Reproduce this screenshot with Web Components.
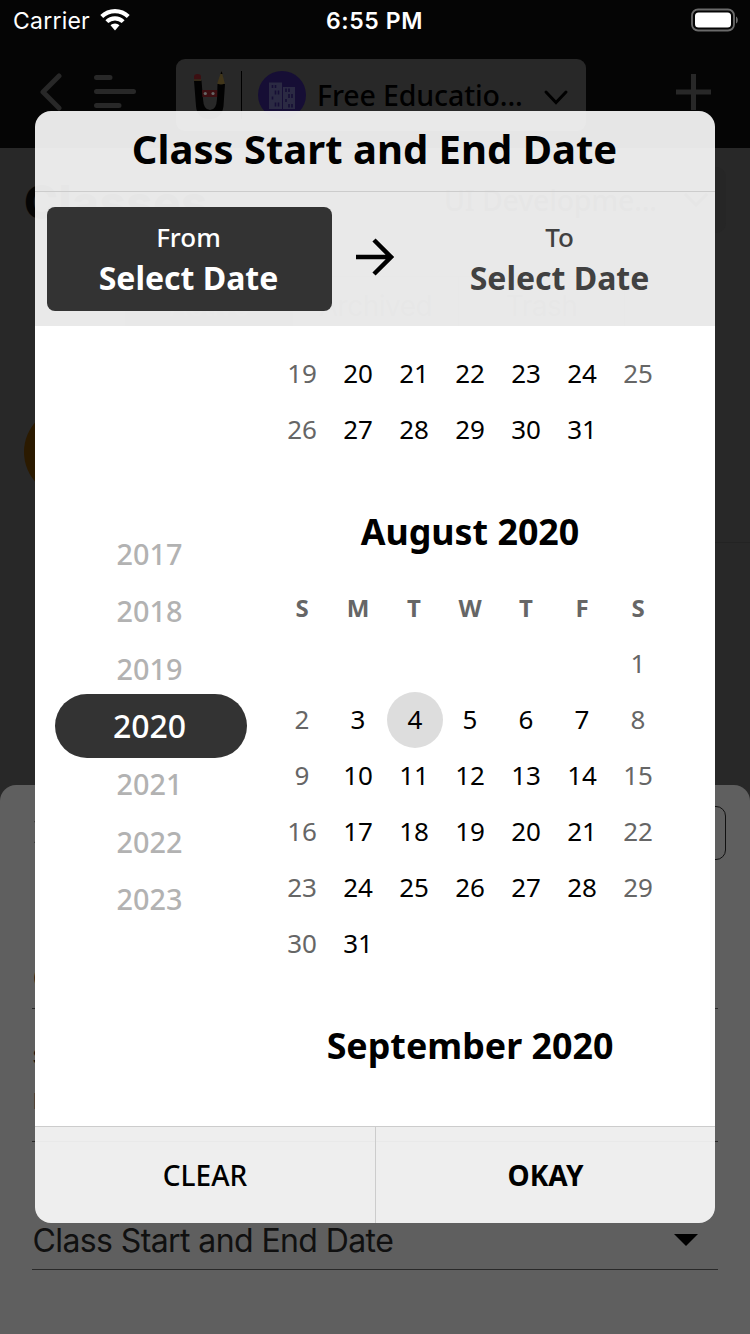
<!DOCTYPE html>
<html lang="en">
<head>
<meta charset="utf-8">
<title>Class Start and End Date</title>
<style>
html,body{margin:0;padding:0}
body{width:750px;height:1334px;overflow:hidden;background:#282828;font-family:"Noto Sans",sans-serif}
</style>
</head>
<body>
<app-screen></app-screen>
<script>
const define = (name, html) => customElements.define(name, class extends HTMLElement {
  connectedCallback() {
    if (this.shadowRoot) return;
    const root = this.attachShadow({ mode: 'open' });
    const t = document.createElement('template');
    t.innerHTML = typeof html === 'function' ? html(this) : html;
    root.appendChild(t.content.cloneNode(true));
  }
});

define('status-bar', `
<style>
:host{display:grid;grid-template-columns:1fr auto 1fr;align-items:center;height:40px;padding:0 12px 0 13px;color:#fff;font:400 23px/40px Inter,sans-serif;box-sizing:border-box}
.left{display:flex;align-items:center;gap:10px;letter-spacing:.22px}
.left span{padding-top:1px}
.left svg{margin-top:-1px}
.time{font-weight:600;letter-spacing:.6px;padding-top:1px;margin-right:2px}
svg{display:block}
.batt{justify-self:end;margin-top:-1px}
</style>
<div class="left"><span>Carrier</span>
<svg width="30" height="22" viewBox="0 0 30 22" fill="#fff"><path d="M15 0C9.300 0 4.100 2.200.3 5.900l2.900 3a17 17 0 0 1 23.600 0l2.900-3C25.900 2.200 20.700 0 15 0Z"/><path d="M15 7.300c-3.700 0-7.100 1.500-9.600 3.900l2.900 2.900a9.600 9.600 0 0 1 13.400 0l2.900-2.900A13.800 13.800 0 0 0 15 7.300Z"/><path d="M15 14.500c-1.700 0-3.300.7-4.500 1.800L15 21.600l4.500-5.300a6.600 6.600 0 0 0-4.500-1.800Z"/></svg></div>
<span class="time">6:55 PM</span>
<svg class="batt" width="48" height="24" viewBox="0 0 48 24"><rect x="2" y="1.500" width="42" height="21" rx="6" fill="none" stroke="#6a6a6a" stroke-width="1.800"/><rect x="5" y="4.500" width="36" height="15" rx="3.500" fill="#fff"/><path d="M46 8.500c2.400 1 2.400 6 0 7Z" fill="#6a6a6a"/></svg>
`);

define('nav-bar', `
<style>
:host{display:flex;align-items:flex-start;height:108px;padding:19px 39px 0 39px;box-sizing:border-box}
svg{display:block;flex:none}
.back{margin-top:14px}.menu{margin:15px 0 0 30px}
.picker{margin-left:39px;width:410px;height:72px;border-radius:9px;background:#282828;display:flex;align-items:center;box-sizing:border-box;padding:0 17px;color:#000;font-weight:500;font-size:28.500px}
.rule{width:1px;height:48px;background:#000;margin:0 16px 0 16px}
.name{margin-left:11px;width:222px;white-space:nowrap;letter-spacing:-.12px}
.chev{margin:5px -2px 0 6px}
.plus{margin:15px 0 0 auto}
</style>
<svg class="back" width="24" height="38" viewBox="0 0 24 38"><path d="M20 3 4 19l16 16" fill="none" stroke="#282828" stroke-width="5" stroke-linecap="round" stroke-linejoin="round"/></svg>
<svg class="menu" width="44" height="36" viewBox="0 0 44 36"><path d="M3.500 3.500H17M3.500 17.500h37M3.500 31.500H26" stroke="#282828" stroke-width="5" stroke-linecap="round"/></svg>
<div class="picker">
<svg width="32" height="48" viewBox="0 0 32 48"><path d="M1 9.500h7.500L10 28q.5 11 7 11t7-11l.5-15H32l-1.500 22Q29 48 16.500 48T3 35Z" fill="#020202"/><path d="M1 8.500V5.500Q1 3 4.500 3T8 5.500v3Z" fill="#3c0f12"/><path d="M1 8.500h7.200v1.300H1Z" fill="#3a2f18"/><path d="m28.500 0-4.300 12.500q3.800 2 7.600 0Z" fill="#41361a"/><path d="m28.500 0-1 3h2Z" fill="#000"/><path d="M9 19h15.200v7H9.500Z" fill="#3c0f12"/><circle cx="12.300" cy="22.500" r="1.600" fill="#666"/><circle cx="20" cy="22.500" r="1.600" fill="#666"/></svg>
<span class="rule"></span>
<svg width="48" height="48" viewBox="0 0 48 48"><circle cx="24" cy="24" r="24" fill="#160e35"/><path d="M11 11.500h13V38H11ZM25 16h12v22H25Z" fill="#2b2a43"/><path d="M14.500 14v3m3-3v3m0 2.500v4m3-4v4m-6 2v3m3 3v4m3-4v4M28 21v-3.500m3 3.500v-3.500m0 5.500v4m3-4v4m-6 1v3m3 2v3.500m3-3.500v3.500" stroke="#160e35" stroke-width="1.600"/></svg>
<span class="name">Free Educatio...</span>
<svg class="chev" width="28" height="18" viewBox="0 0 28 18"><path d="m3 3 10 10.500L23 3" fill="none" stroke="#000" stroke-width="3" stroke-linecap="round"/></svg>
</div>
<svg class="plus" width="35" height="36" viewBox="0 0 35 36"><path d="M17.500 0v36M0 18h35" stroke="#282828" stroke-width="5"/></svg>
`);

define('class-list', `
<style>
:host{display:block;height:1186px;background:#282828;color:#050505;font-family:Inter,sans-serif}
.top{display:flex;justify-content:space-between;align-items:center;height:68px;padding:18px 24px 0 24px}
h1{margin:4px 0 0;font-size:46px;line-height:60px;font-weight:800;letter-spacing:.4px}
.filter{display:flex;align-items:center;justify-content:space-between;width:300px;height:66px;padding:0 18px;box-sizing:border-box;border-radius:10px;background:#262626;color:#000;font:500 28.500px "Noto Sans",sans-serif;letter-spacing:-.2px}
.tabs{display:grid;grid-template-columns:repeat(3,1fr);width:500px;height:60px;margin:42px 0 0 125px;box-sizing:border-box;border:1px solid #1a1a1a;border-radius:8px;color:#0c0c0c;font-size:28px;line-height:58px;text-align:center;letter-spacing:-.5px}
.tabs span+span{border-left:1px solid #1a1a1a}
.tabs .on{background:#1a1a1a;color:#282828}
.avatar{width:90px;height:90px;border-radius:50%;background:#2b1a00;margin:71px 0 45px 24px}
hr{margin:0 0 0 140px;border:0;border-top:1px solid #232323}
</style>
<div class="top"><h1>Classes</h1><div class="filter"><span>UI Developme...</span><svg width="24" height="14"><path d="m1 1 11 11L23 1" fill="none" stroke="#000" stroke-width="3"/></svg></div></div>
<div class="tabs"><span class="on">Active</span><span>Archived</span><span>Trash</span></div>
<div class="avatar"></div><hr>
`);

define('form-row', `
<style>
:host{display:flex;align-items:flex-end;justify-content:space-between;box-sizing:border-box;border-bottom:1px solid #292929;color:#101010;font:400 32px/40px Inter,sans-serif}
</style><slot></slot>
`);

define('create-sheet', `
<style>
:host{display:flex;flex-direction:column;background:#5f5f5f;border-radius:16px 16px 0 0;padding:21px 32px 0;box-sizing:border-box}
.head{display:flex;justify-content:space-between;align-items:center;width:694px;height:54px}
.close{margin:-2px 0 0 1px}
.box{width:130px;height:54px;border:1px solid #111;border-radius:10px;box-sizing:border-box}
.r1{height:149px;padding-bottom:9px}.r2{height:133px;padding-bottom:19px}.r3{height:128px;padding-bottom:8px}
.r1 span{padding-left:.5px}
.stack{display:flex;flex-direction:column;padding-left:.5px}
.small{font-size:20px;line-height:34px}
.val{font-size:22px;line-height:54px;margin-bottom:-6px;color:#333}
svg{display:block}
.lab{letter-spacing:-.6px;padding-left:.5px}
.caret{margin:0 20px 15px 0}
</style>
<div class="head"><svg class="close" width="26" height="26" viewBox="0 0 26 26"><path d="m2 2 22 22M24 2 2 24" stroke="#111" stroke-width="2"/></svg><div class="box"></div></div>
<form-row class="r1"><span>C</span></form-row>
<form-row class="r2"><div class="stack"><span class="small">S</span><span class="val">E</span></div></form-row>
<form-row class="r3"><span class="lab">Class Start and End Date</span><svg class="caret" width="24" height="12" viewBox="0 0 24 12"><path d="M0 0h24L12 12Z" fill="#000"/></svg></form-row>
`);

define('date-tab', el => `
<style>
:host{display:flex;flex-direction:column;align-items:center;width:285px;height:104px;box-sizing:border-box;padding-top:10px;border-radius:8px;color:#414141}
:host([active]){background:#333;color:#fff;padding-right:2px}
.k{font-size:26px;line-height:40px;font-weight:500}
.v{font-size:32px;line-height:42px;font-weight:700}
</style><span class="k">${el.getAttribute('label')}</span><span class="v"><slot></slot></span>
`);

define('year-wheel', `
<style>
:host{display:flex;flex-direction:column;align-items:center;width:192px;height:403px}
span{height:57.600px;line-height:57.600px;font-size:28.800px;font-weight:500;color:#b2b2b2;text-align:center;flex:none;padding-right:3px;box-sizing:border-box}
.sel{width:192px;height:64px;line-height:64px;margin:-3.200px 0;border-radius:32px;background:#333;color:#fff;font-size:32px}
</style>
<span>2017</span><span>2018</span><span>2019</span><span class="sel">2020</span><span>2021</span><span>2022</span><span>2023</span>
`);

define('month-grid', el => {
  const a = n => +el.getAttribute(n);
  const first = a('first') || 1, last = a('last'), lead = a('lead'), today = a('today');
  let cells = '<i></i>'.repeat(lead);
  for (let d = first; d <= last; d++) {
    const col = (lead + d - first) % 7;
    cells += `<span class="${col === 0 || col === 6 ? 'off' : ''}${d === today ? ' today' : ''}">${d}</span>`;
  }
  const title = el.getAttribute('title-text');
  return `
<style>
:host{display:block;width:392px}
h2{margin:0;padding-top:25px;height:97px;line-height:96px;font-size:35.800px;font-weight:700;text-align:center;white-space:nowrap}
.week,.days{display:grid;grid-template-columns:repeat(7,56px);grid-auto-rows:56px;line-height:56px;text-align:center}
.week{font-size:24px;font-weight:700;color:#666}
.days{font-size:26px;line-height:54px;color:#000}
.off{color:#666}
.today{background:#ddd;border-radius:50%;transform:translateX(1px)}
</style>
${title ? `<h2>${title}</h2>` : ''}
${el.hasAttribute('bare') ? '' : `<div class="week">${'SMTWTFS'.split('').map(c => `<span>${c}</span>`).join('')}</div>`}
<div class="days">${cells}</div>`;
});

define('date-dialog', `
<style>
:host{display:flex;flex-direction:column;border-radius:16px;overflow:hidden;color:#000}
h1{margin:0;height:80px;line-height:75px;font-size:40px;font-weight:700;text-align:center;padding-right:1px;background:rgba(253,253,253,.91);border-bottom:1px solid #ccc}
.range{display:flex;align-items:center;justify-content:space-between;height:134px;box-sizing:border-box;padding:0 13px 0 12px;background:rgba(253,253,253,.91)}
.range svg{margin:-4px 0 0 1px}
.body{display:flex;height:800px;overflow:hidden;background:#fff;box-sizing:border-box;padding:20px 49px 0 20px;justify-content:space-between}
year-wheel{margin-top:178.500px}
.foot{display:grid;grid-template-columns:1fr 1fr;height:96px;border-top:1px solid #ccc;background:rgba(253,253,253,.91);line-height:96px;font-size:28px;font-weight:500;text-align:center}
.foot b{font-weight:700;border-left:1px solid #ccc}
</style>
<h1>Class Start and End Date</h1>
<div class="range"><date-tab label="From" active>Select Date</date-tab>
<svg width="38" height="38" viewBox="0 0 38 38"><path d="M0 19h35M18 2l17 17-17 17" fill="none" stroke="#000" stroke-width="4.500"/></svg>
<date-tab label="To">Select Date</date-tab></div>
<div class="body"><year-wheel></year-wheel>
<div><month-grid bare first="19" last="31"></month-grid>
<month-grid title-text="August 2020" lead="6" last="31" today="4"></month-grid>
<month-grid title-text="September 2020" bare last="0"></month-grid></div></div>
<div class="foot"><span>CLEAR</span><b>OKAY</b></div>
`);

define('app-screen', `
<style>
:host{display:block;position:relative;width:750px;height:1334px;overflow:hidden;background:#050505}
create-sheet{position:absolute;left:0;right:0;top:785px;bottom:0}
date-dialog{position:absolute;left:35px;top:111px;width:680px;height:1112px}
</style>
<status-bar></status-bar><nav-bar></nav-bar><class-list></class-list>
<create-sheet></create-sheet><date-dialog></date-dialog>
`);
</script>
</body>
</html>
